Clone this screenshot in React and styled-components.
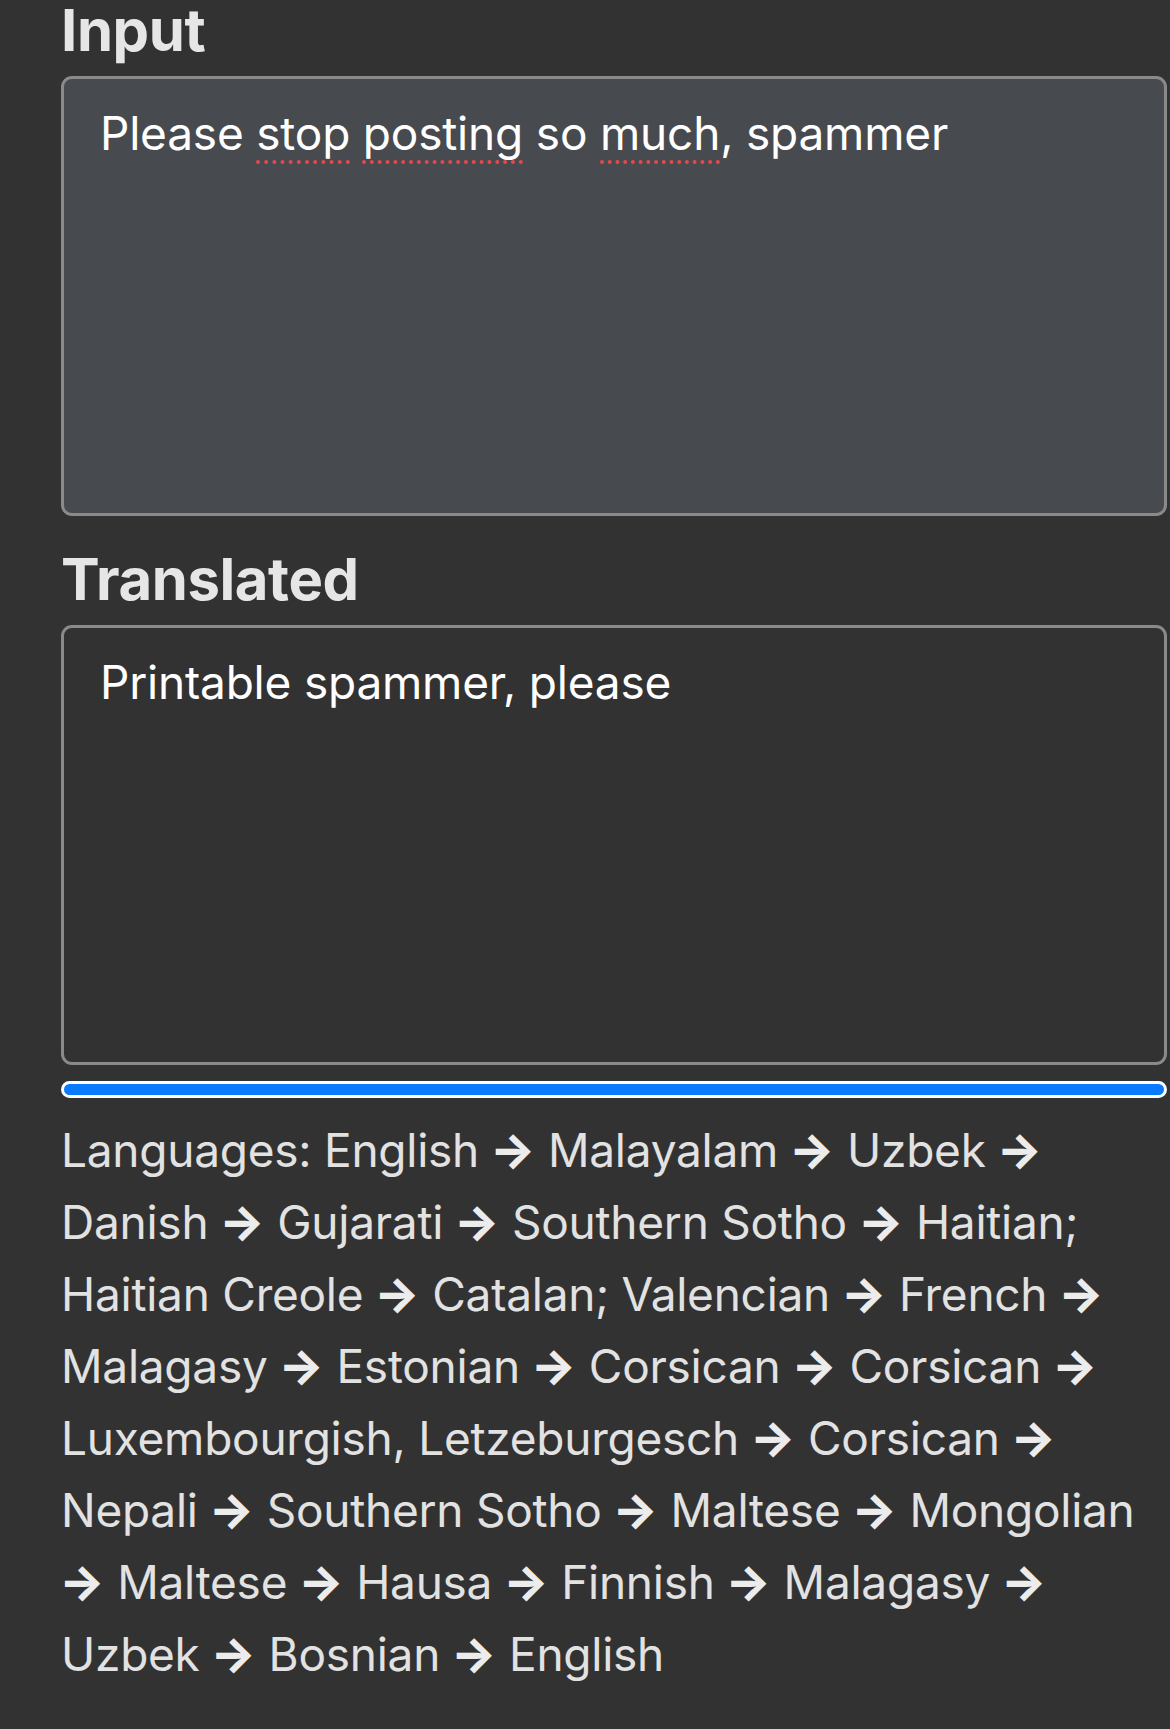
import React from "react";
import styled, { createGlobalStyle } from "styled-components";

const GlobalStyle = createGlobalStyle`
  html, body {
    margin: 0;
    padding: 0;
    background: #323232;
  }
  body {
    font-family: Inter, "Noto Sans", "Liberation Sans", sans-serif;
    color: #e4e4e4;
    overflow: hidden;
  }
`;

const Page = styled.main`
  width: 1106px;
  padding-left: 61px;
  display: flex;
  flex-direction: column;
`;

const Section = styled.section`
  display: flex;
  flex-direction: column;
  margin-top: ${(p) => p.$top}px;
`;

const Heading = styled.h2`
  margin: 0 0 16px 0;
  font-size: 58px;
  line-height: 60px;
  font-weight: 700;
  color: #e6e6e6;
  letter-spacing: -0.4px;
`;

const Box = styled.div`
  box-sizing: border-box;
  height: 440px;
  padding: 18px 36px;
  border: 3px solid #8a8a8a;
  border-radius: 11px;
  background: ${(p) => (p.$filled ? "#474a4e" : "#323232")};
  color: #ffffff;
  font-size: 46px;
  line-height: 72px;
  letter-spacing: -0.2px;
`;

const Flagged = styled.span`
  text-decoration: underline dotted #e5484d;
  text-decoration-thickness: 4px;
  text-underline-offset: 10px;
`;

const Progress = styled.div`
  box-sizing: border-box;
  margin-top: 16px;
  height: 17px;
  border: 3px solid #ffffff;
  border-radius: 9px;
  background: #0a7aff;
`;

const Languages = styled.div`
  margin-top: 16px;
  font-size: 46px;
  line-height: 72px;
  letter-spacing: -0.25px;
  color: #e2e2e2;
`;

const Line = styled.span`
  display: block;
  white-space: nowrap;
`;

const Arrow = styled.span`
  font-weight: 800;
  font-size: 48px;
  color: #ececec;
  margin-left: -2px;
`;

const lines = [
  ["Languages: English", "Malayalam", "Uzbek", ""],
  ["Danish", "Gujarati", "Southern Sotho", "Haitian;"],
  ["Haitian Creole", "Catalan; Valencian", "French", ""],
  ["Malagasy", "Estonian", "Corsican", "Corsican", ""],
  ["Luxembourgish, Letzeburgesch", "Corsican", ""],
  ["Nepali", "Southern Sotho", "Maltese", "Mongolian"],
  ["", "Maltese", "Hausa", "Finnish", "Malagasy", ""],
  ["Uzbek", "Bosnian", "English"],
];

function LangLine({ parts }) {
  const out = [];
  parts.forEach((p, i) => {
    if (i > 0) {
      if (parts[i - 1]) out.push(" ");
      out.push(<Arrow key={"a" + i}>→</Arrow>);
      if (parts[i]) out.push(" ");
    }
    if (p) out.push(<React.Fragment key={"t" + i}>{p}</React.Fragment>);
  });
  return <Line>{out}</Line>;
}

export default function App() {
  return (
    <>
      <GlobalStyle />
      <Page>
        <Section $top={0}>
          <Heading>Input</Heading>
          <Box $filled>
            Please <Flagged>stop</Flagged> <Flagged>posting</Flagged> so{" "}
            <Flagged>much</Flagged>, spammer
          </Box>
        </Section>
        <Section $top={33}>
          <Heading>Translated</Heading>
          <Box>Printable spammer, please</Box>
        </Section>
        <Progress />
        <Languages>
          {lines.map((l, i) => (
            <LangLine key={i} parts={l} />
          ))}
        </Languages>
      </Page>
    </>
  );
}
